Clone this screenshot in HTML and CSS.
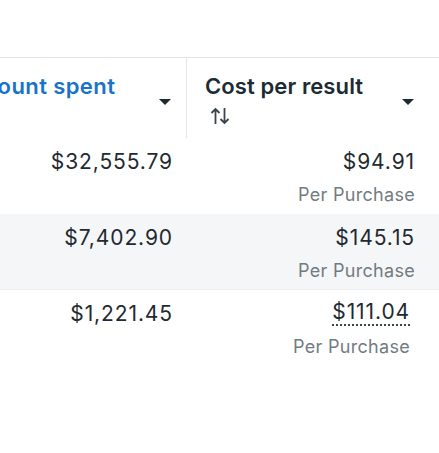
FILE: index.html
```html
<!DOCTYPE html>
<html>
<head>
<meta charset="utf-8">
<link rel="stylesheet" href="styles.css">
</head>
<body>
<div class="table">
  <div class="row head">
    <div class="cell hcell first">
      <span class="htitle blue">Amount spent</span>
      <span class="caret"></span>
    </div>
    <div class="cell hcell">
      <div class="hstack">
        <span class="htitle">Cost per result</span>
        <svg class="sort" width="20" height="18" viewBox="0 0 20 18"><path d="M5.5 17V2M1.5 6L5.5 2L9.5 6M14.5 1v15M10.5 12L14.5 16L18.5 12" fill="none" stroke="#3b454d" stroke-width="1.8"/></svg>
      </div>
      <span class="caret"></span>
    </div>
  </div>
  <div class="row">
    <div class="cell num first">$32,555.79</div>
    <div class="cell num"><span>$94.91</span><span class="sub">Per Purchase</span></div>
  </div>
  <div class="row alt">
    <div class="cell num first">$7,402.90</div>
    <div class="cell num"><span>$145.15</span><span class="sub">Per Purchase</span></div>
  </div>
  <div class="row">
    <div class="cell num first">$1,221.45</div>
    <div class="cell num shifted"><span class="dotted">$111.04</span><span class="sub">Per Purchase</span></div>
  </div>
</div>
</body>
</html>
```
FILE: styles.css
```css
html, body { margin: 0; background: #fff; }
body { font-family: Inter, "Noto Sans", sans-serif; color: #1c2b33; overflow: hidden; }
.table { margin-top: 57px; margin-left: -57px; width: 496px; border-top: 1px solid #e3e6e9; }
.row { display: grid; grid-template-columns: 244px 252px; height: 76px; }
.row.head { height: 80px; }
.row.alt { background: #f5f6f7; border-bottom: 1px solid #eceef0; height: 75px; }
.cell { box-sizing: border-box; }
.hcell { display: flex; justify-content: space-between; padding: 14px 25px 0 18px; }
.hcell.first { border-right: 1px solid #e3e6e9; padding-right: 15px; }
.hstack { display: flex; flex-direction: column; }
.htitle { font-size: 22px; font-weight: 600; line-height: 28px; letter-spacing: 0.1px; }
.blue { color: #1a73c8; letter-spacing: 0.4px; }
.sort { margin: 7px 0 0 5px; }
.caret { width: 0; height: 0; border-left: 6px solid transparent; border-right: 6px solid transparent; border-top: 6px solid #1c2b33; margin-top: 27px; }
.num { display: flex; flex-direction: column; align-items: flex-end; padding: 10px 24px 0 0; font-size: 21px; line-height: 28px; letter-spacing: 0.9px; color: #1f2a31; }
.num.first { padding-right: 14px; }
.num.shifted { padding-right: 29px; }
.sub { font-size: 18px; color: #737b82; line-height: 26px; margin-top: 6px; letter-spacing: 0.3px; }
.dotted { border-bottom: 2px dotted #3a454c; line-height: 24px; margin-bottom: 2px; }
```
